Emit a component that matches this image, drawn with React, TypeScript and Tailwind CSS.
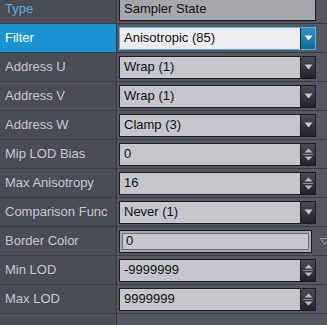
const rows: { label: string; value: string; kind: "select" | "spin" | "color" }[] = [
  { label: "Address U", value: "Wrap (1)", kind: "select" },
  { label: "Address V", value: "Wrap (1)", kind: "select" },
  { label: "Address W", value: "Clamp (3)", kind: "select" },
  { label: "Mip LOD Bias", value: "0", kind: "spin" },
  { label: "Max Anisotropy", value: "16", kind: "spin" },
  { label: "Comparison Func", value: "Never (1)", kind: "select" },
  { label: "Border Color", value: "0", kind: "color" },
  { label: "Min LOD", value: "-9999999", kind: "spin" },
  { label: "Max LOD", value: "9999999", kind: "spin" },
]

function DownArrow({ color = "#c8cad0" }: { color?: string }) {
  return (
    <svg width="9" height="6" viewBox="0 0 9 6">
      <path d="M0.5 0.5 L8.5 0.5 L4.5 5.5 Z" fill={color} />
    </svg>
  )
}

function SpinArrows() {
  return (
    <div className="flex flex-col items-center gap-[1px]">
      <svg width="9" height="5" viewBox="0 0 9 5">
        <path d="M0.5 4.5 L8.5 4.5 L4.5 0.5 Z" fill="#b8bac0" />
      </svg>
      <div className="w-[10px] h-px bg-[#8a8c92]" />
      <svg width="9" height="5" viewBox="0 0 9 5">
        <path d="M0.5 0.5 L8.5 0.5 L4.5 4.5 Z" fill="#b8bac0" />
      </svg>
    </div>
  )
}

function Field({ value, kind }: { value: string; kind: "select" | "spin" }) {
  return (
    <div className="flex h-[23px] w-[197px] border border-[#1b1c21]">
      <div className="flex-1 flex items-center bg-[#c4c6cc] pl-[4px] text-[#101010] border-r border-[#1b1c21]">
        {value}
      </div>
      <div className="w-[14px] flex items-center justify-center bg-gradient-to-b from-[#4a4c55] to-[#22242a]">
        {kind === "select" ? <DownArrow /> : <SpinArrows />}
      </div>
    </div>
  )
}

export default function App() {
  return (
    <div
      className="w-[327px] h-[325px] overflow-hidden bg-[#555762] text-[13px]"
      style={{ fontFamily: '"Liberation Sans", Arial, sans-serif' }}
    >
      <div className="-mt-[5px]">
        <div className="flex h-[29px] border-b border-[#3b3d45]">
          <div className="w-[117px] shrink-0 flex items-center pl-[5px] bg-[#4a4c56] border-r border-[#35363e] text-[#55b3d8]">
            Type
          </div>
          <div className="flex-1 flex items-center pl-[2px]">
            <div className="flex items-center h-[23px] w-[197px] border border-[#1b1c21] bg-[#a6a8ae] pl-[4px] text-[#101010]">
              Sampler State
            </div>
          </div>
        </div>

        <div className="flex h-[29px] border-b border-[#3b3d45]">
          <div className="w-[117px] shrink-0 flex items-center pl-[5px] bg-[#1a94d3] border-r border-[#35363e] text-white">
            Filter
          </div>
          <div className="flex-1 flex items-center pl-[2px]">
            <div className="flex h-[23px] w-[197px] border border-[#56b2e0]">
              <div className="flex-1 flex items-center bg-[#ececef] pl-[4px] text-[#101010] border-r border-[#1b1c21]">
                Anisotropic (85)
              </div>
              <div className="w-[14px] flex items-center justify-center bg-gradient-to-b from-[#2e95c6] to-[#136a95]">
                <DownArrow color="#ffffff" />
              </div>
            </div>
          </div>
        </div>

        {rows.map((r) => (
          <div key={r.label} className="flex h-[29px] border-b border-[#3b3d45]">
            <div className="w-[117px] shrink-0 flex items-center pl-[5px] bg-[#4a4c56] border-r border-[#35363e] text-[#c6c8ce]">
              {r.label}
            </div>
            <div className="flex-1 flex items-center pl-[2px]">
              {r.kind === "color" ? (
                <div className="flex items-center gap-[8px]">
                  <div className="h-[23px] w-[193px] border border-[#1b1c21] bg-[#a8aab0] p-[2px]">
                    <div className="h-full border border-[#6c6e74] bg-[#c6c8ce] pl-[3px] flex items-center text-[#101010]">
                      {r.value}
                    </div>
                  </div>
                  <svg width="10" height="7" viewBox="0 0 10 7" className="shrink-0">
                    <path d="M0.5 0.5 L9.5 0.5 L5 6.5 Z" fill="none" stroke="#a0a2a8" />
                  </svg>
                </div>
              ) : (
                <Field value={r.value} kind={r.kind} />
              )}
            </div>
          </div>
        ))}

        <div className="flex h-[29px]">
          <div className="w-[117px] shrink-0 bg-[#4a4c56] border-r border-[#35363e]" />
          <div className="flex-1" />
        </div>
      </div>
    </div>
  )
}
